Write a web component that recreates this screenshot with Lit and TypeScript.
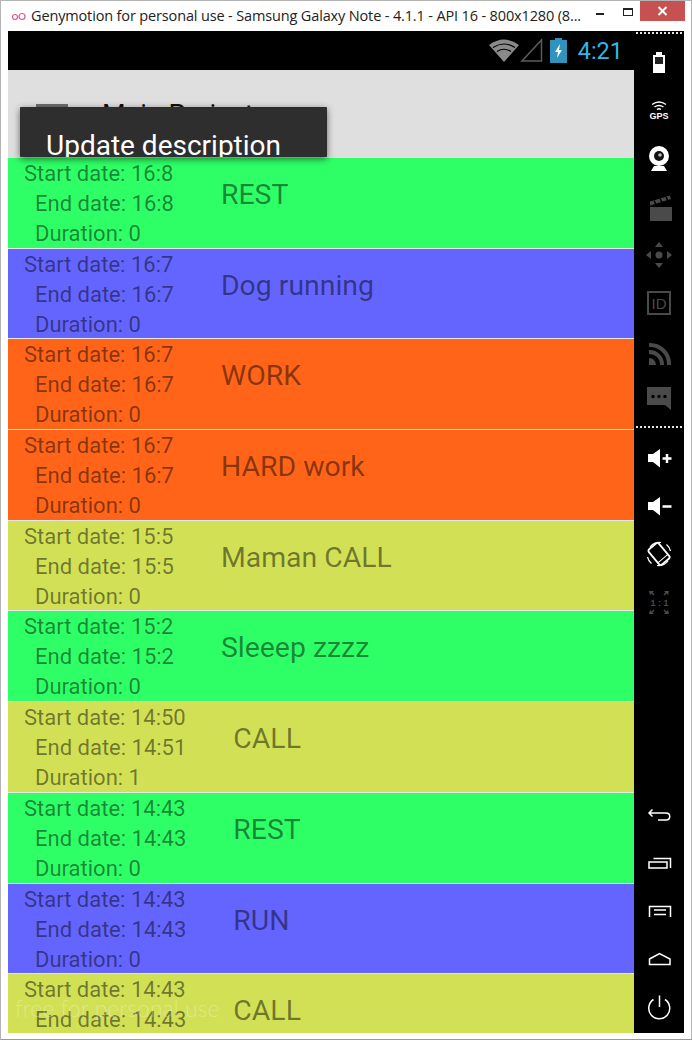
import { LitElement, html, css, svg } from "lit";
import { customElement } from "lit/decorators.js";

const G = "#2eff66", B = "#6464ff", O = "#ff6418", Y = "#d2e056";
const rows = [
  ["16:8", "16:8", "0", "REST", G],
  ["16:7", "16:7", "0", "Dog running", B],
  ["16:7", "16:7", "0", "WORK", O],
  ["16:7", "16:7", "0", "HARD work", O],
  ["15:5", "15:5", "0", "Maman CALL", Y],
  ["15:2", "15:2", "0", "Sleeep zzzz", G],
  ["14:50", "14:51", "1", "CALL", Y],
  ["14:43", "14:43", "0", "REST", G],
  ["14:43", "14:43", "0", "RUN", B],
  ["14:43", "14:43", "0", "CALL", Y],
];

const W = "#fff";
const D = "#4a4a4a";
const top = [
  svg`<path d="M13 6h6v3h3v18H10V9h3z" fill="${W}"/><rect x="12" y="11" width="8" height="7" fill="#222"/>`,
  svg`<path d="M9 10.500q7-5 14 0M11.500 13q4.500-3 9 0M14 15.500q2-1.500 4 0" fill="none" stroke="${W}" stroke-width="1.300"/><text x="16" y="25" text-anchor="middle" class="gps">GPS</text>`,
  svg`<circle cx="16" cy="14" r="10" fill="${W}"/><circle cx="16" cy="14" r="5" fill="#111"/><circle cx="17" cy="13" r="1.800" fill="#bbb"/><path d="M11 24h10l3 5H8z" fill="${W}"/>`,
  svg`<path d="M7 16h22v14H7z" fill="${D}"/><path d="M7 14.500 28 8l-1-3.500-20 6z" fill="${D}"/><path d="m11 9.500 2 4M17 7.500l2 4M23 6l2 4" stroke="#000" stroke-width="1.500"/>`,
  svg`<circle cx="16" cy="16" r="3.500" fill="${D}"/><path d="m16 3 4 5h-8zM16 29l-4-5h8zM3 16l5-4v8zM29 16l-5 4v-8z" fill="${D}"/>`,
  svg`<rect x="5" y="5" width="22" height="22" fill="none" stroke="${D}" stroke-width="2"/><text x="16" y="22" text-anchor="middle" class="id">ID</text>`,
  svg`<path d="M6 10a19 19 0 0 1 20 20M6 17A12.500 12.500 0 0 1 19 30" fill="none" stroke="${D}" stroke-width="4"/><path d="M6 23a7 7 0 0 1 7 7H6z" fill="${D}"/>`,
  svg`<path d="M4 4h24v23l-6-5H4z" fill="${D}"/><circle cx="10" cy="13.500" r="1.700" fill="#000"/><circle cx="16" cy="13.500" r="1.700" fill="#000"/><circle cx="22" cy="13.500" r="1.700" fill="#000"/>`,
];
const mid = [
  svg`<path d="M5 12h5l7-5v18.500l-7-5.500H5z" fill="${W}"/><path d="M19.500 16.500h9M24 12v9" stroke="${W}" stroke-width="2.500"/>`,
  svg`<path d="M5 12h5l7-5v18.500l-7-5.500H5z" fill="${W}"/><path d="M19.500 16.500h9" stroke="${W}" stroke-width="2.500"/>`,
  svg`<g transform="rotate(-40 16 16)"><rect x="9.500" y="6" width="13" height="20" rx="2" fill="none" stroke="${W}" stroke-width="1.800"/><path d="M9.500 22h13" stroke="${W}"/></g><path d="M7 9a12 12 0 0 1 11-4.500M25 23a12 12 0 0 1-11 4.500M4.500 19a12 12 0 0 0 4 6.500M27.500 13a12 12 0 0 0-4-6.500" fill="none" stroke="${W}" stroke-width="1.200"/>`,
  svg`<path d="M6 5h5l-1.500 1.500 2 2-1 1-2-2L7 9zM26 5h-5l1.500 1.500-2 2 1 1 2-2L25 9zM6 28h5l-1.500-1.500 2-2-1-1-2 2L7 24zM26 28h-5l1.500-1.500-2-2 1-1 2 2L25 24z" fill="${D}"/><text x="16.500" y="19.500" text-anchor="middle" class="ratio">1 : 1</text>`,
];
const nav = [
  svg`<path d="M9.500 11.500 6 15l3.500 3.500M6 15h17c5 0 5 7 0 7h-8" fill="none" stroke="${W}" stroke-width="1.500"/>`,
  svg`<path d="M6 16h18v6H6z" fill="none" stroke="${W}" stroke-width="1.500"/><path d="M10.500 12.500H27.500V22" fill="none" stroke="${W}" stroke-width="1.500"/>`,
  svg`<path d="M6.500 22V11.500h21V22" fill="none" stroke="${W}" stroke-width="1.500"/><path d="M11 15h12M11 19.500h12" stroke="${W}" stroke-width="1.500"/>`,
  svg`<path d="M6.500 16 16.500 10.500 27 16v5.500H6.500z" fill="none" stroke="${W}" stroke-width="1.500"/>`,
  svg`<path d="M10.500 8.500a10.500 10.500 0 1 0 11.500 0M16.500 4.500V16" fill="none" stroke="${W}" stroke-width="1.500"/>`,
];

@customElement("app-root")
export class AppRoot extends LitElement {
  static styles = css`
    :host { display: block; width: 692px; height: 1040px; overflow: hidden; background: #f0f0f0; font-family: Roboto, sans-serif; }
    .window { display: flex; flex-direction: column; height: 1040px; box-sizing: border-box; border: 1px solid #b4b4b4; border-bottom-color: #9a9a9a; background: #fff; position: relative; }
    .titlebar { height: 30px; flex: none; display: flex; align-items: center; box-sizing: border-box; padding-left: 10px; color: #222; font: 14.500px/30px "Open Sans", sans-serif; white-space: nowrap; }
    .logo { width: 15px; height: 9px; margin-right: 5px; flex: none; }
    .title-text { flex: 1; overflow: hidden; letter-spacing: -.01em; padding-bottom: 1px; }
    .controls { display: flex; align-items: flex-start; align-self: flex-start; margin-right: 6px; }
    .min { width: 27px; height: 19px; position: relative; }
    .min::after { content: ""; position: absolute; left: 9px; top: 12px; width: 8px; height: 2px; background: #222; }
    .max { width: 27px; height: 19px; position: relative; margin-right: -1px; }
    .max::after { content: ""; position: absolute; left: 9px; top: 7px; width: 8px; height: 5px; border: 1px solid #222; border-top-width: 2px; }
    .close { width: 45px; height: 20px; background: #c75050; display: flex; align-items: center; justify-content: center; }
    .body { flex: 1; display: flex; min-height: 0; padding: 0 7px 6px 7px; }
    .screen { width: 626px; flex: none; display: flex; flex-direction: column; overflow: hidden; position: relative; }
    .status { height: 39px; flex: none; background: #000; display: flex; align-items: center; justify-content: flex-end; gap: 4px; padding-right: 11px; }
    .time { color: #33b5e5; font-size: 23.500px; margin-left: 7px; margin-top: 1px; }
    .actionbar { height: 88px; flex: none; background: #dfdfdf; display: flex; box-sizing: border-box; padding: 34px 0 0 28px; color: #111; overflow: hidden; }
    .appicon { width: 32px; height: 32px; background: #6e6e6e; margin-right: 34px; flex: none; }
    .apptitle { font-size: 27px; line-height: 32px; margin-top: -5px; white-space: nowrap; }
    .row { height: 89.700px; flex: none; border-bottom: 1px solid #e8e8e8; display: flex; color: rgba(0,0,0,.48); }
    .dates { padding-left: 16px; font-size: 22px; line-height: 30px; white-space: nowrap; margin-top: 1px; }
    .ind { padding-left: 11px; }
    .name { margin-left: 47px; margin-top: 21px; font-size: 28.400px; line-height: 32px; white-space: nowrap; }
    .popup { position: absolute; left: 12px; top: 76px; width: 307px; height: 50px; background: #2e2e2e; color: #fff; box-sizing: border-box; padding: 21px 0 0 26px; font-size: 28px; line-height: 36px; overflow: hidden; box-shadow: 0 2px 7px rgba(0,0,0,.55); border-radius: 1px; }
    .mark { position: absolute; left: 7px; top: 961px; font: 300 23px/32px Lato, sans-serif; color: rgba(255,255,255,.3); white-space: nowrap; }
    .side { width: 50px; flex: none; background: #000; display: flex; flex-direction: column; align-items: center; }
    .dots { width: 46px; flex: none; border-top: 2px dotted #e4e4e4; }
    .group { display: flex; flex-direction: column; align-items: center; }
    .slot { height: 48.200px; display: flex; align-items: center; justify-content: center; }
    .icon { width: 32px; height: 32px; display: block; }
    .gps { font: 700 9px "Liberation Sans", sans-serif; fill: #fff; }
    .id { font: 400 15px "Liberation Sans", sans-serif; fill: #4a4a4a; }
    .ratio { font: 700 9px "Liberation Sans", sans-serif; fill: #4a4a4a; }
    .first { padding-top: 4px; }
    .second { padding-top: 6px; }
    .bottom { margin-top: auto; padding-bottom: 2px; }
  `;

  private icon(c: unknown) {
    return html`<div class="slot"><svg class="icon" viewBox="0 0 32 32">${c}</svg></div>`;
  }

  render() {
    return html`<div class="window">
      <div class="titlebar">
        <svg class="logo" viewBox="0 0 15 9"><circle cx="4" cy="5" r="2.500" fill="none" stroke="#e0559a" stroke-width="1.200"/><circle cx="11" cy="4.500" r="3" fill="none" stroke="#e0559a" stroke-width="1.200"/></svg>
        <span class="title-text">Genymotion for personal use - Samsung Galaxy Note - 4.1.1 - API 16 - 800x1280 (8...</span>
        <div class="controls">
          <div class="min"></div><div class="max"></div>
          <div class="close"><svg width="11" height="10" viewBox="0 0 11 10"><path d="m1.500 1 8 8m0-8-8 8" stroke="#fff" stroke-width="2"/></svg></div>
        </div>
      </div>
      <div class="body">
        <div class="screen">
          <div class="status">
            <svg width="32" height="26" viewBox="0 0 32 26"><path d="M16 24 1 7q15-11 30 0z" fill="#8a8a8a"/><path d="M5 9.500q11-7 22 0M9 13.500q7-4.500 14 0" fill="none" stroke="#000" stroke-width="1.200"/></svg>
            <svg width="23" height="25" viewBox="0 0 23 25" style="margin-left:-4px"><path d="M21.500 2v21H2z" fill="none" stroke="#5c5c5c" stroke-width="1.500"/></svg>
            <svg width="17" height="25" viewBox="0 0 17 25" style="margin-left:3px"><path d="M5 0h7v2h5v23H0V2h5z" fill="#2f93bd"/><path d="m10 6-5 8h3l-1 6 5-8H9z" fill="#fff"/></svg>
            <span class="time">4:21</span>
          </div>
          <div class="actionbar"><div class="appicon"></div><span class="apptitle">Main Project</span></div>
          ${rows.map(
            (r) => html`<div class="row" style="background:${r[4]}">
              <div class="dates">
                <div>Start date: ${r[0]}</div>
                <div class="ind">End date: ${r[1]}</div>
                <div class="ind">Duration: ${r[2]}</div>
              </div>
              <div class="name">${r[3]}</div>
            </div>`
          )}
          <div class="popup">Update description</div>
          <div class="mark">free for personal use</div>
        </div>
        <div class="side">
          <div class="dots" style="margin-top:1px"></div>
          <div class="group first">${top.map((c) => this.icon(c))}</div>
          <div class="dots" style="margin-top:2px"></div>
          <div class="group second">${mid.map((c) => this.icon(c))}</div>
          <div class="group bottom">${nav.map((c) => this.icon(c))}</div>
        </div>
      </div>
    </div>`;
  }
}
